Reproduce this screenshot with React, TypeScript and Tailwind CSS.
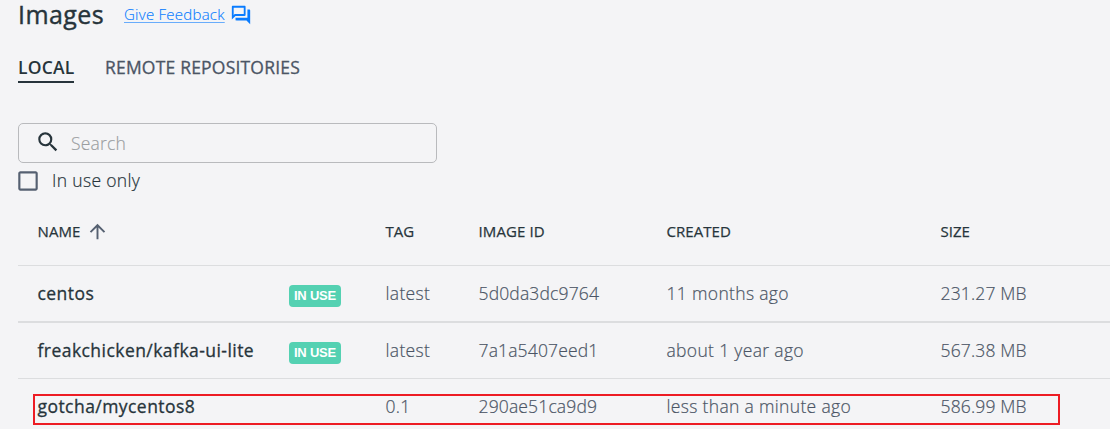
import { MdArrowUpward, MdCheckBoxOutlineBlank, MdOutlineQuestionAnswer, MdSearch } from "react-icons/md";

type Image = { name: string; inUse: boolean; tag: string; id: string; created: string; size: string };

const images: Image[] = [
  { name: "centos", inUse: true, tag: "latest", id: "5d0da3dc9764", created: "11 months ago", size: "231.27 MB" },
  { name: "freakchicken/kafka-ui-lite", inUse: true, tag: "latest", id: "7a1a5407eed1", created: "about 1 year ago", size: "567.38 MB" },
  { name: "gotcha/mycentos8", inUse: false, tag: "0.1", id: "290ae51ca9d9", created: "less than a minute ago", size: "586.99 MB" },
];

const columns = "grid grid-cols-[251.5px_96.5px_93px_188px_274px_1fr] items-center pl-[19.5px] whitespace-nowrap";
const rowHeights = ["h-[57px] border-b-2", "h-[56px] border-b", "h-[55px]"];

export default function App() {
  return (
    <main className="h-[429px] w-[1110px] overflow-hidden bg-[#f4f4f6] pl-[18px] font-['Open_Sans',sans-serif] text-[17.5px] text-[#27343b]">
      <header className="flex h-[28px] items-center whitespace-nowrap">
        <h1 className="w-[106px] text-[25px] leading-[28px] font-medium tracking-[0.4px] [-webkit-text-stroke:0.4px]">Images</h1>
        <a className="w-[106px] text-[15px] leading-5 font-light tracking-[0.25px] text-[#0a7cff] underline decoration-[#0a7cff]/60 decoration-1 underline-offset-2 [-webkit-text-stroke:0.15px]">Give Feedback</a>
        <MdOutlineQuestionAnswer className="mt-px size-[22px] text-[#0a7cff]" />
      </header>

      <nav className="mt-[25px] flex gap-[31px] whitespace-nowrap leading-[29px]">
        <span className="h-[30px] w-14 border-b-2 border-[#27343b] font-semibold tracking-[0.2px]">LOCAL</span>
        <span className="font-medium tracking-[0.2px] text-[#4b5565] [-webkit-text-stroke:0.3px]">REMOTE REPOSITORIES</span>
      </nav>

      <div className="mt-10 flex h-10 w-[419px] items-center rounded-[5px] border border-[#b9babd] pl-[17px]">
        <MdSearch className="-mt-[2px] -ml-px size-[26px]" />
        <span className="ml-[10px] font-light tracking-[0.2px] text-[#9a9da0] [-webkit-text-stroke:0.15px]">Search</span>
      </div>
      <label className="flex h-[35px] items-center">
        <MdCheckBoxOutlineBlank className="-ml-[3px] size-[26px] text-[#556071]" />
        <span className="ml-[11px] font-light tracking-[0.33px] [-webkit-text-stroke:0.2px]">In use only</span>
      </label>

      <section className="relative">
        <div className={`${columns} h-[68px] border-b border-[#dcdddf] text-[15px] font-medium [-webkit-text-stroke:0.25px]`}>
          <span className="col-span-2 flex items-center gap-[5px] tracking-[0.1px]">
            NAME <MdArrowUpward className="size-[23px] text-[#556071]" />
          </span>
          <span>TAG</span>
          <span className="tracking-[0.1px]">IMAGE ID</span>
          <span className="tracking-[0.05px]">CREATED</span>
          <span>SIZE</span>
        </div>
        {images.map((image, i) => (
          <div key={image.id} className={`${columns} ${rowHeights[i]} border-[#dcdddf] font-light text-[#4b5565] [-webkit-text-stroke:0.2px]`}>
            <span className="font-medium tracking-[0.45px] text-[#27343b] [-webkit-text-stroke:0.3px]">{image.name}</span>
            <span>
              {image.inUse && (
                <span className="mt-1 flex h-[22px] w-[52px] items-center justify-center rounded-[4px] bg-[#54d1b2] font-['Liberation_Sans',sans-serif] text-[13px] leading-none font-bold tracking-[-0.2px] text-white [-webkit-text-stroke:0]">
                  IN USE
                </span>
              )}
            </span>
            <span className="tracking-[0.33px]">{image.tag}</span>
            <span className="tracking-[0.15px]">{image.id}</span>
            <span className="tracking-[0.33px]">{image.created}</span>
            <span className="tracking-[0.15px]">{image.size}</span>
          </div>
        ))}
        <div className="absolute top-[196px] left-[15px] h-[31px] w-[1027px] border-2 border-[#ed1c24]" />
      </section>
    </main>
  );
}
